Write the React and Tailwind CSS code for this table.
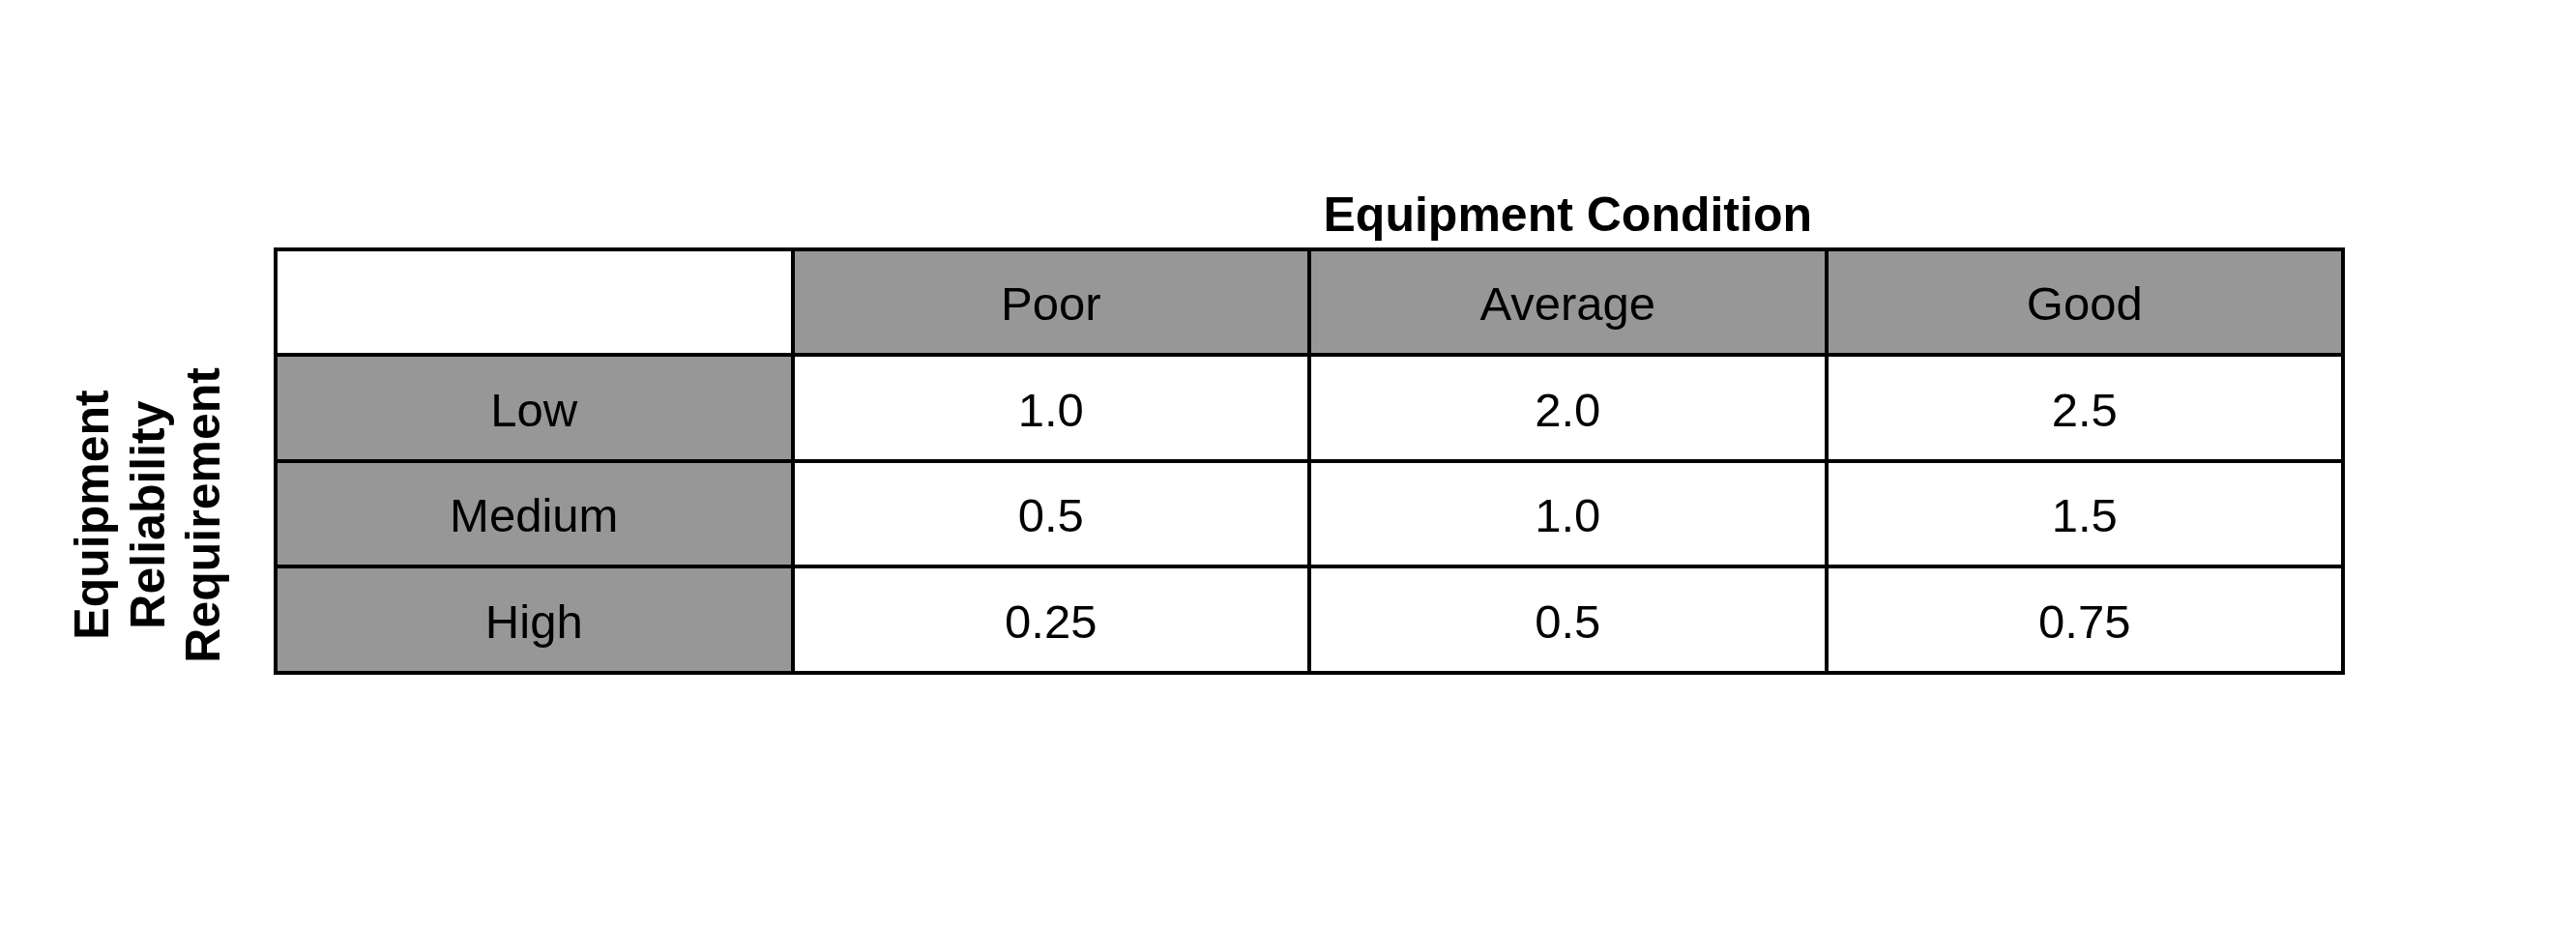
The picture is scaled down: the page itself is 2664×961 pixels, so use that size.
import React from "react";

const cols = ["Poor", "Average", "Good"];

const rows = [
  { label: "Low", values: ["1.0", "2.0", "2.5"] },
  { label: "Medium", values: ["0.5", "1.0", "1.5"] },
  { label: "High", values: ["0.25", "0.5", "0.75"] },
];

const Cell = ({ children, gray }) => (
  <div
    className={`flex items-center justify-center pt-[5px] text-[49px] leading-none text-black ${
      gray ? "bg-[#979797]" : "bg-white"
    }`}
  >
    {children}
  </div>
);

const App = () => {
  return (
    <div
      className="min-h-[961px] w-full bg-white pt-[194px] pl-[67px]"
      style={{ fontFamily: '"Liberation Sans", Arial, sans-serif' }}
    >
      <div className="flex">
        {/* side label */}
        <div className="flex w-[216px] shrink-0 flex-col pt-[173px]">
          <div className="flex h-[331px] items-center">
            <div className="rotate-180 text-center text-[50px] font-bold leading-[57.5px] text-black [writing-mode:vertical-rl]">
              Equipment
              <br />
              Reliability
              <br />
              Requirement
            </div>
          </div>
        </div>

        <div className="w-[2142px]">
          {/* title over the condition columns */}
          <div className="grid grid-cols-4 gap-[4px] px-[4px] pb-[4px]">
            <div className="col-span-3 col-start-2 text-center text-[50px] font-bold leading-[57.5px] text-black">
              Equipment Condition
            </div>
          </div>

          {/* matrix */}
          <div className="grid grid-cols-4 auto-rows-[105.5px] gap-[4px] bg-black p-[4px]">
            <Cell />
            {cols.map((c) => (
              <Cell key={c} gray>
                {c}
              </Cell>
            ))}
            {rows.map((r) => (
              <React.Fragment key={r.label}>
                <Cell gray>{r.label}</Cell>
                {r.values.map((v, i) => (
                  <Cell key={i}>{v}</Cell>
                ))}
              </React.Fragment>
            ))}
          </div>
        </div>
      </div>
    </div>
  );
};

export default App;
